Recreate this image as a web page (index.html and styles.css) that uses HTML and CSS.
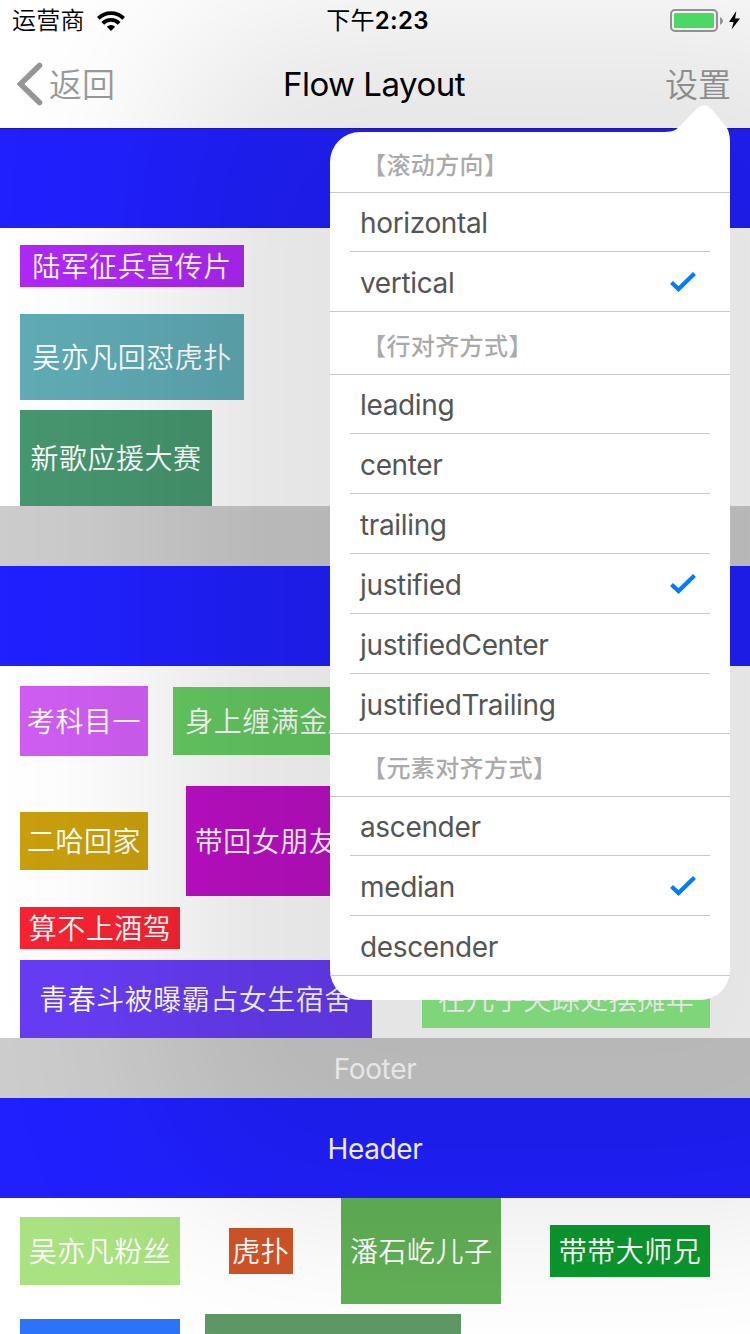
FILE: index.html
```html
<!DOCTYPE html>
<html lang="zh-CN">
<head>
<meta charset="utf-8">
<title>Flow Layout</title>
<link rel="stylesheet" href="styles.css">
</head>
<body>
<div class="screen">
  <div class="status">
    <div class="carrier"><span>运营商</span>
      <svg class="wifi" width="28" height="21" viewBox="0 0 28 21"><g fill="none" stroke="#000" stroke-width="3.8"><path d="M1.3 7.3a18 18 0 0 1 25.4 0"/><path d="M5.8 12.3a11.6 11.6 0 0 1 16.4 0"/></g><path d="M14 20l-4.2-4.3a6 6 0 0 1 8.4 0z"/></svg>
    </div>
    <div class="clock"><span class="period">下午</span>2:23</div>
    <div class="power">
      <svg width="70" height="24" viewBox="0 0 70 24"><rect x="1" y="1" width="46" height="21" rx="4" fill="#fff" stroke="#9a9a9a" stroke-width="2"/><rect x="4" y="4" width="40" height="15" rx="1.5" fill="#50e56a"/><path d="M50 8v8q3-1.500 3-4t-3-4z" fill="#9a9a9a"/><path d="M66.300 2L59 13h4.600L61.600 20.500 70 9.500h-4.900z"/></svg>
    </div>
  </div>
  <div class="nav">
    <div class="back"><svg width="26" height="44" viewBox="0 0 26 44"><path d="M22.500 3.500L3.500 22l19 18.500" fill="none" stroke="#969696" stroke-width="5.500" stroke-linecap="round"/></svg><span>返回</span></div>
    <div class="title">Flow Layout</div>
    <div class="settings">设置</div>
  </div>
  <div class="band header topmost"></div>
  <div class="rows">
    <div class="row r76"><span class="chip w7 h42 violet">陆军征兵宣传片</span></div>
    <div class="row r86"><span class="chip w7 h86 teal">吴亦凡回怼虎扑</span></div>
    <div class="row r96"><span class="chip w6 h96 sea">新歌应援大赛</span></div>
  </div>
  <div class="band footer"></div>
  <div class="band header"></div>
  <div class="rows">
    <div class="row r110 gap25"><span class="chip w4 h70 orchid">考科目一</span><span class="chip w7 h68 leaf">身上缠满金属链</span></div>
    <div class="row r110 gap38"><span class="chip w4 h58 gold">二哈回家</span><span class="chip w5 h110 magenta">带回女朋友</span></div>
    <div class="row r44"><span class="chip w5 h42 red">算不上酒驾</span></div>
    <div class="row r78"><span class="chip w11 h78 indigo">青春斗被曝霸占女生宿舍</span><span class="chip w9 h58 mint">在儿子失踪处摆摊年</span></div>
  </div>
  <div class="band footer">Footer</div>
  <div class="band header">Header</div>
  <div class="rows">
    <div class="row r106"><span class="chip w5 h68 lime">吴亦凡粉丝</span><span class="chip w2 h46 rust">虎扑</span><span class="chip w5 h106 grass">潘石屹儿子</span><span class="chip w5 h52 green">带带大师兄</span></div>
    <div class="row r86 gap25"><span class="chip w5 h76 azure"></span><span class="chip w8 h86 moss"></span></div>
  </div>

  <div class="popover">
    <svg class="arrow" width="70" height="60" viewBox="0 0 70 60"><path d="M0 27C12 27 15 26.500 20 21L36 4.500q8-8.500 16 0L65 20.500Q70 26 70 37V60H0z" fill="#fff"/></svg>
    <div class="menu">
      <div class="group first">【滚动方向】</div>
      <div class="item short">horizontal</div>
      <div class="item last">vertical<svg class="check" width="26" height="20" viewBox="0 0 26 20"><path d="M1.500 10.500l7 6.500L24.500 1.500"/></svg></div>
      <div class="group">【行对齐方式】</div>
      <div class="item short">leading</div>
      <div class="item">center</div>
      <div class="item">trailing</div>
      <div class="item">justified<svg class="check" width="26" height="20" viewBox="0 0 26 20"><path d="M1.500 10.500l7 6.500L24.500 1.500"/></svg></div>
      <div class="item">justifiedCenter</div>
      <div class="item last">justifiedTrailing</div>
      <div class="group">【元素对齐方式】</div>
      <div class="item short">ascender</div>
      <div class="item">median<svg class="check" width="26" height="20" viewBox="0 0 26 20"><path d="M1.500 10.500l7 6.500L24.500 1.500"/></svg></div>
      <div class="item last">descender</div>
    </div>
  </div>
</div>
</body>
</html>
```
FILE: styles.css
```css
* { box-sizing: border-box; }
body { margin: 0; font-family: Inter, "Noto Sans CJK SC", sans-serif; }
.screen { position: relative; width: 750px; height: 1334px; overflow: hidden; background: #fff; }
.status { display: grid; grid-template-columns: 1fr auto 1fr; align-items: center; height: 40px; padding: 2px 10px 0 12px; font-size: 24px; line-height: 38px; }
.carrier { display: flex; align-items: center; gap: 12px; letter-spacing: .3px; font-weight: 350; }
.clock { padding-left: 3px; font-weight: 600; letter-spacing: .3px; }
.period { font-weight: 400; }
.power { display: flex; justify-content: flex-end; }
.nav { display: grid; grid-template-columns: 1fr auto 1fr; align-items: center; height: 88px; padding: 0 19px 0 17px; }
.back { display: flex; align-items: center; gap: 6px; }
.back, .settings { font-size: 33px; line-height: 44px; font-weight: 350; color: #9a9a9a; }
.back span, .settings { padding-top: 1px; }
.title { font-size: 33px; line-height: 44px; letter-spacing: -.5px; color: #000; }
.settings { text-align: right; }
.band { display: flex; align-items: center; justify-content: center; padding-top: 2px; font-size: 28px; letter-spacing: -.35px; color: #fff; }
.header { height: 100px; background: #2020ff; }
.topmost { border-top: 1px solid #1c1cb8; }
.footer { height: 60px; background: #ccc; }
.rows { display: flex; flex-direction: column; gap: 10px; padding: 0 40px 0 20px; }
.row { display: flex; align-items: center; justify-content: space-between; }
.gap25 { justify-content: flex-start; gap: 25px; }
.gap38 { justify-content: flex-start; gap: 38px; }
.r44 { height: 44px; }
.r76 { height: 76px; }
.r78 { height: 78px; }
.r86 { height: 86px; }
.r96 { height: 96px; }
.r106 { height: 106px; }
.r110 { height: 110px; }
.chip { display: flex; align-items: center; justify-content: center; flex: none; padding-top: 2px; font-size: 28px; line-height: 40px; letter-spacing: .5px; font-weight: 350; color: #fff; white-space: nowrap; }
.w2 { width: 64px; }
.w4 { width: 128px; }
.w5 { width: 160px; }
.w6 { width: 192px; }
.w7 { width: 224px; }
.w8 { width: 256px; }
.w9 { width: 288px; }
.w11 { width: 352px; }
.h42 { height: 42px; }
.h46 { height: 46px; }
.h52 { height: 52px; }
.h58 { height: 58px; }
.h68 { height: 68px; }
.h70 { height: 70px; }
.h76 { height: 76px; }
.h78 { height: 78px; }
.h86 { height: 86px; }
.h96 { height: 96px; }
.h106 { height: 106px; }
.h110 { height: 110px; }
.violet { background: #af28f6; }
.teal { background: #60abb5; }
.sea { background: #46966f; }
.orchid { background: #cf5df2; }
.leaf { background: #66cb63; }
.gold { background: #c99f0c; }
.magenta { background: #bd10c6; }
.red { background: #f62432; }
.indigo { background: #673df4; }
.mint { background: #8eef88; }
.lime { background: #a9e280; }
.rust { background: #d05327; }
.grass { background: #61b056; }
.green { background: #0b972d; }
.azure { background: #2b73f9; }
.moss { background: #5e9965; }
.popover { position: absolute; left: 330px; top: 132px; width: 400px; height: 868px; isolation: isolate; }
.popover::before { content: ""; position: absolute; z-index: -1; inset: -120px -170px -205px; border-radius: 120px; background: #000; opacity: .1; filter: blur(90px); }
.arrow { position: absolute; right: 0; top: -27px; }
.menu { position: relative; height: 868px; border-radius: 30px; background: linear-gradient(#fff, #fff) 0 30px no-repeat, linear-gradient(90deg, #fff 360px, transparent 360px) no-repeat; }
.group { height: 63px; padding: 2px 32px 0; border-bottom: 1px solid #c8c8c8; font-size: 24px; line-height: 66px; letter-spacing: .4px; font-weight: 500; color: #aaa; }
.first { height: 61px; line-height: 63px; }
.item { display: flex; align-items: center; justify-content: space-between; height: 60px; margin: 0 20px; padding: 2px 14px 0 10px; border-bottom: 1px solid #c8c8c8; font-size: 28px; letter-spacing: -.35px; color: #555; }
.short { height: 59px; padding-top: 1px; }
.last { margin: 0; padding: 2px 34px 0 30px; }
.check { margin-top: -1px; fill: none; stroke: #007aff; stroke-width: 4.200; }
```
